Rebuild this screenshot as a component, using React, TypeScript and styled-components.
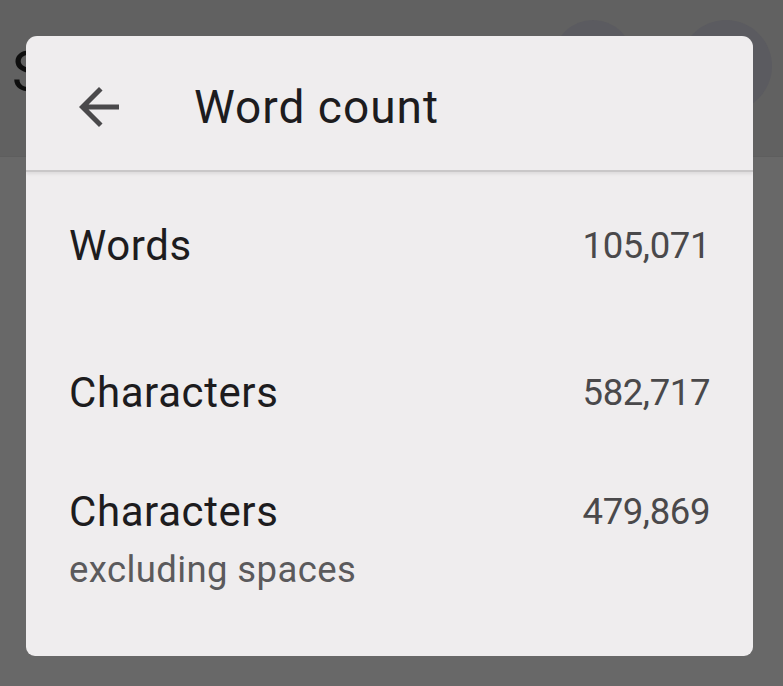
import styled, { createGlobalStyle } from "styled-components";

const GlobalStyle = createGlobalStyle`
  html, body {
    margin: 0;
    padding: 0;
  }
  body {
    background: #686868;
    font-family: Roboto, "Noto Sans", "Liberation Sans", sans-serif;
  }
`;

const Screen = styled.div`
  position: relative;
  width: 783px;
  height: 686px;
  overflow: hidden;
  background: #686868;
`;

const AppBar = styled.div`
  display: flex;
  align-items: flex-start;
  height: 157px;
  padding: 0 11px 0 12px;
  box-sizing: border-box;
  background: #616161;
  border-bottom: 1px solid #5e5e5e;
`;

const AppTitle = styled.span`
  font-size: 56px;
  line-height: 1;
  margin-top: 44px;
  color: #0e0e0e;
  flex: 1;
`;

const Avatar = styled.div<{ $size: number }>`
  width: ${(p) => p.$size}px;
  height: ${(p) => p.$size}px;
  border-radius: 50%;
  margin-top: 20px;
  background: #5b5b60;
  & + & {
    margin-left: 47px;
  }
`;

const Dialog = styled.div`
  position: absolute;
  left: 26px;
  top: 36px;
  width: 727px;
  height: 620px;
  border-radius: 11px 11px 9px 9px;
  background: #efedee;
  overflow: hidden;
`;

const Header = styled.div`
  display: flex;
  align-items: center;
  height: 136px;
  padding: 8px 0 0 43px;
  box-sizing: border-box;
  border-bottom: 2px solid #c9c7c8;
  box-shadow: 0 2px 3px rgba(0, 0, 0, 0.08);
`;

const BackButton = styled.button`
  display: flex;
  padding: 0;
  border: 0;
  background: none;
  color: #4a494b;
  cursor: pointer;
`;

const Title = styled.h1`
  margin: 0 0 0 65px;
  font-size: 46px;
  font-weight: 400;
  line-height: 54px;
  letter-spacing: 1px;
  color: #1d1c1e;
`;

const Body = styled.div`
  display: flex;
  flex-direction: column;
  padding: 50px 43px 0 43px;
`;

const Row = styled.div<{ $space: number }>`
  display: flex;
  align-items: flex-start;
  justify-content: space-between;
  margin-top: ${(p) => p.$space}px;
`;

const LabelBox = styled.div`
  display: flex;
  flex-direction: column;
`;

const Label = styled.span`
  font-size: 42px;
  line-height: 48px;
  letter-spacing: 0.6px;
  color: #1d1c1e;
`;

const Sub = styled.span`
  margin-top: 12px;
  font-size: 36.5px;
  line-height: 44px;
  letter-spacing: 0.4px;
  color: #5b5a5c;
`;

const Value = styled.span`
  font-size: 36.5px;
  line-height: 48px;
  letter-spacing: -0.4px;
  color: #4a494b;
`;

const ArrowBack = () => (
  <svg width="60" height="60" viewBox="0 0 24 24" fill="currentColor">
    <path d="M20 11H7.83l5.59-5.59L12 4l-8 8 8 8 1.41-1.41L7.83 13H20v-2z" />
  </svg>
);

const stats = [
  { label: "Words", value: "105,071", space: 0 },
  { label: "Characters", value: "582,717", space: 99 },
  { label: "Characters", sub: "excluding spaces", value: "479,869", space: 71 },
];

const App = () => {
  return (
    <Screen>
      <GlobalStyle />
      <AppBar>
        <AppTitle>S</AppTitle>
        <Avatar $size={80} />
        <Avatar $size={92} />
      </AppBar>
      <Dialog>
        <Header>
          <BackButton aria-label="Back">
            <ArrowBack />
          </BackButton>
          <Title>Word count</Title>
        </Header>
        <Body>
          {stats.map((s, i) => (
            <Row key={i} $space={s.space}>
              <LabelBox>
                <Label>{s.label}</Label>
                {s.sub && <Sub>{s.sub}</Sub>}
              </LabelBox>
              <Value>{s.value}</Value>
            </Row>
          ))}
        </Body>
      </Dialog>
    </Screen>
  );
};

export default App;
